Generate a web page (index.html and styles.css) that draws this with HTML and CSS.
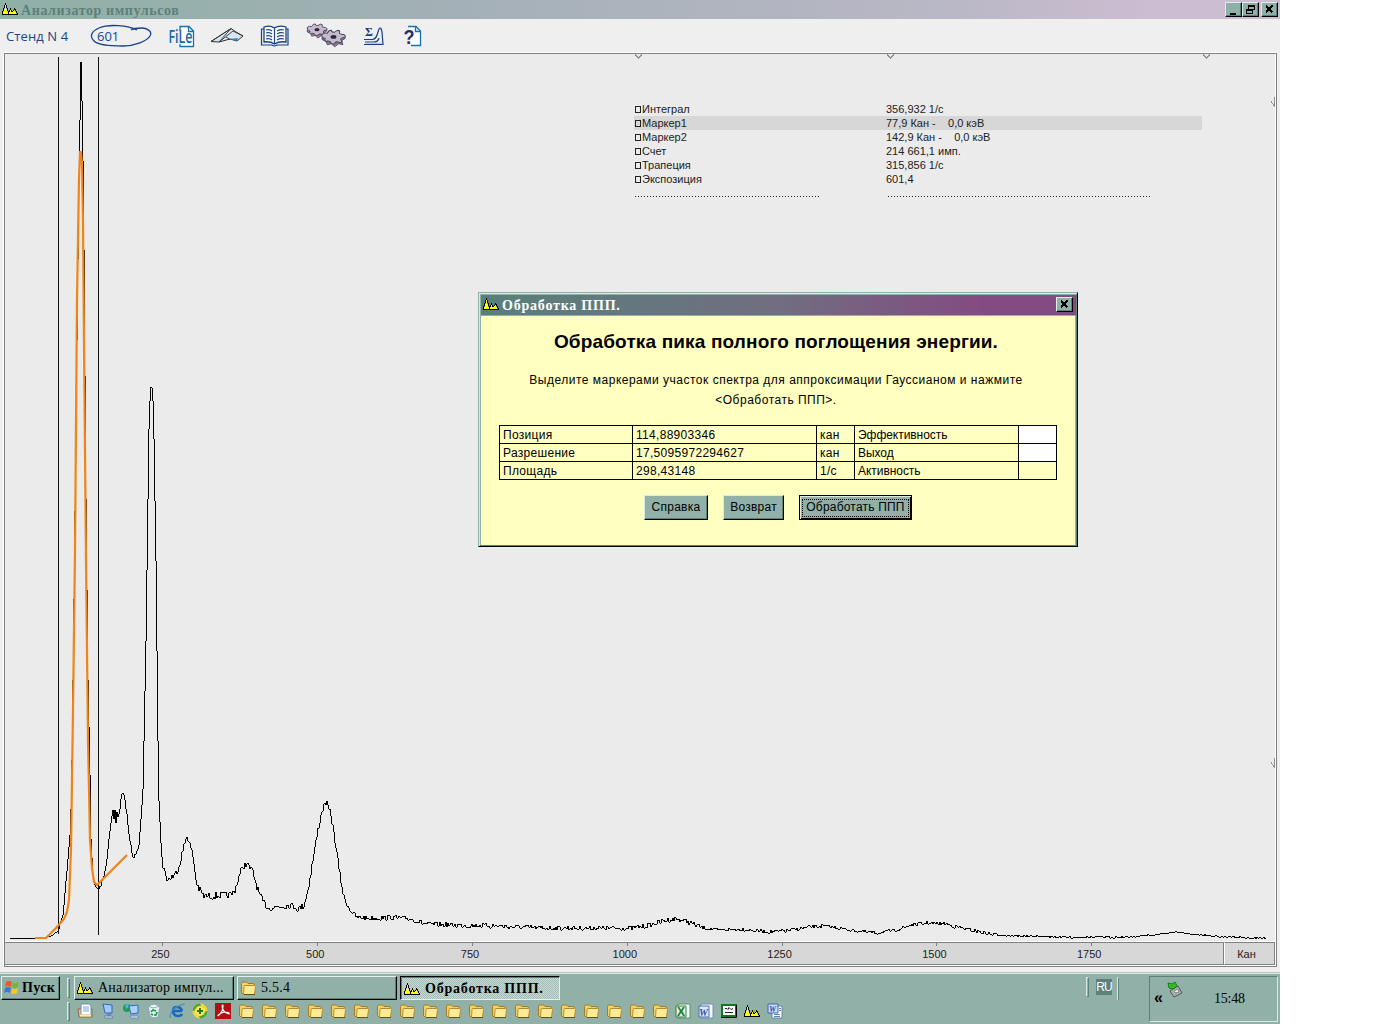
FILE: index.html
```html
<!DOCTYPE html>
<html lang="ru">
<head>
<meta charset="utf-8">
<title>Анализатор импульсов</title>
<link rel="stylesheet" href="styles.css">
</head>
<body>
<svg class="defs" width="0" height="0">
  <symbol id="peaks" viewBox="0 0 16 14"><g shape-rendering="crispEdges"><path d="M1 10H2V7H3V3H4V7H5V10H6V12H1ZM7 12V10H8V8H9V10H11V9H12V8H13V10H14V12Z" fill="#ffff00"/><path d="M0 12h16v1H0zM0 9h1v3H0zM1 6h1v3H1zM2 3h1v3H2zM3 1h1v2H3zM4 3h1v3H4zM5 6h1v3H5zM6 9h1v3H6zM7 8h1v2H7zM8 6h1v2H8zM9 8h1v2H9zM10 9h1v1H10zM11 8h1v1H11zM12 6h1v2H12zM13 7h1v2H13zM14 9h1v2H14zM15 11h1v1H15z"/></g></symbol>
  <symbol id="folder" viewBox="0 0 16 16"><path d="M1.500 13V3.500Q1.500 2 3 2h3.500L8 3.500h5Q14.500 3.500 14.500 5v8.500H2Z" fill="#f3d264" stroke="#a67c22"/><path d="M3.500 14.500 4 6.500Q4 5.500 5 5.500h9.500Q15.500 5.500 15.500 6.500L14.500 14.500Z" fill="#ffeb96" stroke="#b58d30"/><path d="M4 14.500h11" stroke="#6d5010"/></symbol>
  <symbol id="gear" viewBox="0 0 24 18"><path d="M1 8V10L5 12 6 15 10 14 13 17 17 14 21 15 20 11 23 9V7L19 8 16 13 9 13Z" fill="#8d8199" stroke="#4c4260" stroke-width=".8"/><path d="M1 5Q3 3 6 4 7 1 10 1 10 3 13 3 16 0 18 2 17 5 20 5 24 5 23 8 19 8 19 10 21 13 18 13 14 11 13 14 10 15 9 12 6 11 5 12 3 11 4 9 0 8 1 5Z" fill="#c5bccb" stroke="#4c4260" stroke-width="1"/><ellipse cx="12" cy="7.500" rx="2.800" ry="1.800" fill="#2e2440"/></symbol>
</svg>
<div class="desktop">
  <header class="titlebar">
    <svg class="app-icon" width="16" height="14"><use href="#peaks"/></svg>
    <h1 class="title">Анализатор импульсов</h1>
    <div class="controls">
      <span class="ctl"><svg width="15" height="13"><path d="M4 10h6v2H4z"/></svg></span>
      <span class="ctl"><svg width="15" height="13"><path d="M5.500 2.500h6v4h-6zM5 3h7M3.500 6.500h6v4h-6zM3 7h7" fill="none" stroke="#000"/><path d="M4 8h5v2H4z" fill="#8fb0a8"/></svg></span>
      <span class="ctl last"><svg width="15" height="13"><path d="M4 2.500 10.500 9.500M10.500 2.500 4 9.500" stroke="#000" stroke-width="2"/></svg></span>
    </div>
  </header>
  <nav class="toolbar">
    <span class="stand">Стенд N 4</span>
    <svg class="tool t-count" width="62" height="26" viewBox="90 22 62 26"><path d="M137 29C128 24 108 23 99 27S90 36 94 40 111 45 123 45 147 40 150 35 146 27 142 27 134 27 131 29" fill="none" stroke="#1b418c" stroke-width="1.300"/><text x="97" y="39.500" class="hand count">601</text></svg>
    <svg class="tool t-file" width="28" height="24" viewBox="168 23 28 24"><path d="M180 30V25.500H189L193.500 30V45.500H180V43M188.500 25.500V30.500H193.500" fill="#fff" stroke="#1672a8" stroke-width="1.300"/><text x="168.500" y="42" class="hand file" textLength="24" lengthAdjust="spacingAndGlyphs">FiLe</text></svg>
    <svg class="tool t-plane" width="34" height="18" viewBox="210 26 34 18"><path d="M211 40.500 231 27.500 236 31 243 35 237 40 230 38 219 41Z" fill="#d7e7f1" stroke="#333" stroke-width="1"/><path d="M211 40.500 231 27.500 219 41M219 41 233 30 243 35M226 36 230 38.500" fill="none" stroke="#333" stroke-width=".9"/><path d="M230 38 238 37 237 40Z" fill="#1c93b5"/></svg>
    <svg class="tool t-book" width="30" height="24" viewBox="260 23 30 24"><path d="M264 26Q270 24 274.500 27 279 24 286 26V41Q279 40 274.500 43 270 40 264 41Z" fill="#fff" stroke="#174184" stroke-width="1.300"/><path d="M264 28H261.500V44H272Q274.500 46 277 44H288V28H286M274.500 27V43M266 29q4-1 6 1M266 32q4-1 6 1M266 35q4-1 6 1M266 38q4-1 6 1M277 30q3-2 7-1M277 33q3-2 7-1M277 36q3-2 7-1M277 39q3-2 7-1" fill="none" stroke="#174184" stroke-width="1.200"/></svg>
    <svg class="tool t-gears" width="40" height="26" viewBox="306 22 40 26"><use href="#gear" x="306" y="22" width="22" height="16"/><use href="#gear" x="321" y="28" width="25" height="19"/></svg>
    <svg class="tool t-sigma" width="23" height="22" viewBox="363 25 23 22"><path d="M364 39.500H372Q376 39 377 35L379 29Q381 26 382 32L383 44.500H364M365 42H374Q378 42 379 38" fill="none" stroke="#1b3d85" stroke-width="1.200"/><path d="M365 43.300h17" stroke="#a4c5df"/><text x="365" y="36" class="sigma">Σ</text></svg>
    <svg class="tool t-help" width="20" height="24" viewBox="403 23 20 24"><path d="M408 25.500H416L420.500 30V44.500H411M415.500 26V30.500H420" fill="#fff" stroke="#1672a8" stroke-width="1.300"/><text x="403.500" y="43" class="help" textLength="11" lengthAdjust="spacingAndGlyphs">?</text></svg>
  </nav>
  <main class="frame">
    <section class="plot">
      <svg class="chart" width="1270" height="887" viewBox="5 54 1270 887">
        <g class="handles">
          <path d="M635 54.500 638.500 58 642 54.500M887 54.500 890.500 58 894 54.500M1203 54.500 1206.500 58 1210 54.500M1274.500 97V106L1271 101.500M1274.500 758V767L1271 762.500"/>
        </g>
        <path id="spectrum" class="spectrum"/>
        <path class="marker" d="M58.500 57V934M98.500 57V935"/>
        <path class="fit" d="M35 938H46L56 928 64 919 67 912 69 900 71 850 72 780 73 710 75 550 77 300 79 179 80 152H81L82 165 83 222 84 340 86 560 88 740 90 840 92 868 94 882 97 885 127 855"/>
      </svg>
      <div class="readout">
        <div class="row"><span class="name">Интеграл</span><span class="val">356,932 1/с</span></div>
        <div class="row active"><span class="name">Маркер1</span><span class="val">77,9 Кан -    0,0 кэВ</span></div>
        <div class="row"><span class="name">Маркер2</span><span class="val">142,9 Кан -    0,0 кэВ</span></div>
        <div class="row"><span class="name">Счет</span><span class="val">214 661,1 имп.</span></div>
        <div class="row"><span class="name">Трапеция</span><span class="val">315,856 1/с</span></div>
        <div class="row"><span class="name">Экспозиция</span><span class="val">601,4</span></div>
        <div class="rules"><i class="dots"></i><i class="dots long"></i></div>
      </div>
    </section>
    <footer class="scale">
      <div class="ticks"><span>250</span><span>500</span><span>750</span><span>1000</span><span>1250</span><span>1500</span><span>1750</span></div>
      <div class="unit">Кан</div>
    </footer>
  </main>
  <footer class="taskbar">
    <div class="tasks">
      <div class="task-row">
        <button class="start"><svg width="17" height="16" viewBox="0 0 17 16"><path d="M2 3Q5 1 8 3L7 8Q4 6 1 8Z" fill="#ee5a25"/><path d="M9 3.500Q12 5 15 3L14 8Q11 10 8 8Z" fill="#73b82d"/><path d="M1 9Q4 7 7 9L6 14Q3 12 0 14Z" fill="#3b78d8"/><path d="M8 9.500Q11 11 14 9L13 14Q10 16 7 14Z" fill="#f7c52d"/></svg><span>Пуск</span></button>
        <i class="grip"></i>
        <button class="task"><svg width="16" height="14"><use href="#peaks"/></svg><span>Анализатор импул...</span></button>
        <button class="task dir"><svg width="16" height="16"><use href="#folder"/></svg><span>5.5.4</span></button>
        <button class="task pressed"><svg width="16" height="14"><use href="#peaks"/></svg><span>Обработка ППП.</span></button>
      </div>
      <div class="quick-row">
        <i class="grip"></i>
        <div class="quick">
          <svg viewBox="0 0 16 16"><path d="M1 6h14v8H2Z" fill="#e5c678" stroke="#8b6b35"/><path d="M4 1h8l2 2v9H4Z" fill="#fff" stroke="#6d91bb"/><path d="M6 4h6M6 6h6M6 8h6" stroke="#7aa4d4"/><path d="M3 12.500h11" stroke="#f9eab5" stroke-width="2"/></svg>
          <svg viewBox="0 0 16 16"><path d="M3 1 12 2 12 10 5 10Z" fill="#9cccfa" stroke="#3565b4"/><path d="M7 10h4v3H7z" fill="#6685b4"/><path d="M4 13h8l1 2H5Z" fill="#dae5f5" stroke="#6982ad"/></svg>
          <svg viewBox="0 0 16 16"><circle cx="4" cy="5" r="4" fill="#269a4d"/><path d="M2 2 5 1 6 4 3 6Z" fill="#49b5e8"/><path d="M6 3 15 2 15 10 8 11Z" fill="#a8d2fa" stroke="#3668b7"/><path d="M7 13h8l1 2H8Z" fill="#eef4ff" stroke="#6d8bb6"/></svg>
          <svg viewBox="0 0 16 16"><path d="M2 3 8 1 14 3 12 14 7 15 4 13Z" fill="#e4f1f4" stroke="#88a9b6"/><path d="M2 3 7 5 14 3" fill="#fff" stroke="#88a9b6"/><path d="M5 9 7 7 10 8M11 9 10 12 8 12M7 12 5 11" fill="none" stroke="#1a9a3b" stroke-width="1.700"/></svg>
          <svg viewBox="0 0 16 16"><path d="M13 8H4Q4 4 8 4T13 8M4 9Q5 13 9 13 12 13 13 11" fill="none" stroke="#1768c4" stroke-width="2.600"/><path d="M1 15Q-1 10 8 4T15 2Q12 1 7 4T1 15" fill="#e9bc4a" stroke="#4487c8" stroke-width=".7"/></svg>
          <svg viewBox="0 0 16 16"><circle cx="8" cy="8" r="7.500" fill="#f4d43b"/><path d="M8 .5A7.500 7.500 0 0 0 .5 8L4 7 9 3ZM8 15.500A7.500 7.500 0 0 0 15.500 8L12 9 7 13Z" fill="#4ba635"/><circle cx="8" cy="8" r="5" fill="#ffe257"/><path d="M8 5v6M5 8h6" stroke="#257b2d" stroke-width="2"/></svg>
          <svg viewBox="0 0 16 16"><path d="M0 0h16v16H0z" fill="#b40d12"/><path d="M3 13Q8 9 8 3 8 1 7 3 8 10 14 11 15 9 9 9 3 11 3 13" fill="none" stroke="#fff" stroke-width="1.200"/></svg>
          <svg><use href="#folder"/></svg><svg><use href="#folder"/></svg><svg><use href="#folder"/></svg><svg><use href="#folder"/></svg><svg><use href="#folder"/></svg><svg><use href="#folder"/></svg><svg><use href="#folder"/></svg><svg><use href="#folder"/></svg><svg><use href="#folder"/></svg><svg><use href="#folder"/></svg><svg><use href="#folder"/></svg><svg><use href="#folder"/></svg><svg><use href="#folder"/></svg><svg><use href="#folder"/></svg><svg><use href="#folder"/></svg><svg><use href="#folder"/></svg><svg><use href="#folder"/></svg><svg><use href="#folder"/></svg><svg><use href="#folder"/></svg>
          <svg viewBox="0 0 16 16"><path d="M3 1h12v14H3Z" fill="#f8fff8" stroke="#559360"/><path d="M1 3h10v11H1Z" fill="#dcefd9" stroke="#338444"/><text x="2" y="12.500" class="doc-letter green">X</text></svg>
          <svg viewBox="0 0 16 16"><path d="M3 1h12v14H3Z" fill="#f8faff" stroke="#718ebe"/><path d="M1 3h10v11H1Z" fill="#dce7fb" stroke="#4d70ae"/><text x="1" y="12.500" class="doc-letter">W</text></svg>
          <svg viewBox="0 0 16 16"><path d="M1 2h14v11H1Z" fill="#fff" stroke="#087a20" stroke-width="2"/><path d="M4 5.500h2l1 1 1-2 2 2 2-1M4 9.500h8" fill="none" stroke="#222"/><path d="M0 14.500h15.500V2" fill="none" stroke="#000"/></svg>
          <svg viewBox="0 0 16 14"><use href="#peaks"/></svg>
          <svg viewBox="0 0 16 16"><path d="M5 3h10v12H5Z" fill="#fff" stroke="#6c83aa"/><path d="M7 11.500h6M7 13.500h6M12 5.500h2M12 7.500h2" stroke="#5582c0"/><path d="M1 1h10v9H1Z" fill="#c9dcf8" stroke="#3e68ae"/><text x="2" y="8.500" class="doc-letter small">W</text></svg>
        </div>
      </div>
    </div>
    <div class="lang"><i class="grip"></i><span>RU</span><i class="grip flat"></i></div>
    <div class="tray"><span class="more">«</span><svg width="16" height="17" viewBox="0 0 16 17"><path d="M3 10 11 5 15 12 7 16Z" fill="#aab2b8" stroke="#555"/><path d="M7 10 11 8 12 11 8 12Z" fill="#eee" stroke="#555" stroke-width=".6"/><path d="M1 2 5 3 8 1 10 5 6 8 2 7Z" fill="#35bc25" stroke="#15801b"/></svg><time>15:48</time></div>
  </footer>

  <section class="dialog">
    <header class="dialog-title"><svg width="16" height="14"><use href="#peaks"/></svg><h2>Обработка ППП.</h2><span class="ctl"><svg width="15" height="13"><path d="M4 2.500 10.500 9.500M10.500 2.500 4 9.500" stroke="#000" stroke-width="2"/></svg></span></header>
    <div class="dialog-body">
      <h3>Обработка пика полного поглощения энергии.</h3>
      <p>Выделите маркерами участок спектра для аппроксимации Гауссианом и нажмите<br>&lt;Обработать ППП&gt;.</p>
      <table>
        <colgroup><col class="c1"><col class="c2"><col class="c3"><col class="c4"><col class="c5"></colgroup>
        <tr><td>Позиция</td><td>114,88903346</td><td>кан</td><td class="label">Эффективность</td><td class="input"></td></tr>
        <tr><td>Разрешение</td><td>17,5095972294627</td><td>кан</td><td class="label">Выход</td><td class="input"></td></tr>
        <tr><td>Площадь</td><td>298,43148</td><td>1/с</td><td class="label">Активность</td><td></td></tr>
      </table>
      <div class="actions"><button class="btn b1">Справка</button><button class="btn b2">Возврат</button><button class="btn b3"><span>Обработать ППП</span></button></div>
    </div>
  </section>
</div>
<script src="chart.js"></script>
</body>
</html>
```
FILE: styles.css
```css
*, *::before { box-sizing: border-box; }
body { margin: 0; background: #fff; width: 1395px; height: 1024px; overflow: hidden; font-family: "Liberation Sans", sans-serif; color: #000; }
h1, h2, h3, p { margin: 0; }
button { margin: 0; padding: 0; font: inherit; color: inherit; }
svg { display: block; flex: none; }
.defs { position: absolute; }
.desktop { position: relative; width: 1280px; height: 1024px; display: flex; flex-direction: column; background: #efefef; }

.titlebar { height: 19px; flex: none; display: flex; align-items: center; padding: 0 2px; background: linear-gradient(90deg, #8fb0a6 0, #a3b0b6 440px, #bab8c6 960px, #cdbdd2 1160px); }
.title { flex: 1; margin-left: 3px; padding-top: 2px; font: bold 14px/17px "Liberation Serif", serif; letter-spacing: .6px; color: #5b817a; }
.app-icon { margin-top: -1px; }
.controls { display: flex; }
.ctl { width: 17px; height: 15px; background: #8fb0a8; border: 1px solid; border-color: #dfeeea #000 #000 #dfeeea; box-shadow: inset -1px -1px #5b817a; }
.ctl svg { shape-rendering: crispEdges; }
.ctl.last { margin-left: 2px; }

.toolbar { height: 33px; flex: none; display: flex; align-items: center; padding-left: 6px; }
.tool { overflow: visible; }
.stand { width: 84px; font: 13px "Open Sans", sans-serif; letter-spacing: .1px; color: #17458f; }
.hand { font-family: "Open Sans", sans-serif; fill: #17458f; }
.count { font-size: 13px; }
.file { font-size: 18px; font-weight: 600; fill: #1567a2; }
.sigma { font: bold 12px "Liberation Serif", serif; fill: #1b3d85; }
.help { font: bold 20px "Liberation Sans", sans-serif; fill: #1b2f72; }
.t-file { margin-left: 16px; }
.t-plane { margin-left: 14px; }
.t-book { margin-left: 16px; }
.t-gears { margin-left: 16px; }
.t-sigma { margin-left: 17px; }
.t-help { margin-left: 17px; }

.frame { width: 1274px; height: 915px; flex: none; margin-left: 3px; border: 1px solid #fff; border-bottom: 0; border-right: 0; display: flex; flex-direction: column; box-shadow: inset 1px 1px #808080, inset -1px -1px #808080, inset -2px -2px #fff; padding: 1px 2px 2px 1px; background: #ebebeb; }
.plot { position: relative; height: 887px; flex: none; }
.handles { fill: none; stroke: #909090; shape-rendering: crispEdges; }
.spectrum { fill: none; stroke: #000; stroke-width: 1; shape-rendering: crispEdges; }
.marker { fill: none; stroke: #111; shape-rendering: crispEdges; }
.fit { fill: none; stroke: #f08418; stroke-width: 2.2; }
.readout { position: absolute; left: 629px; top: 48px; width: 568px; font-size: 11px; line-height: 14px; color: #222; }
.row { display: grid; grid-template-columns: 252px 1fr; height: 14px; white-space: pre; }
.row.active { background: #d7d7d7; }
.name::before { content: ""; display: inline-block; width: 6px; height: 7px; margin: 0 1px 0 1px; border: 1px solid #222; }
.rules { display: flex; gap: 69px; padding: 10px 0 0 1px; }
.dots { width: 184px; height: 1px; background: repeating-linear-gradient(90deg, #222 0 1px, transparent 1px 3px); }
.dots.long { width: 263px; }

.scale { height: 24px; flex: none; display: flex; border-top: 1px solid #fff; background: #d7d7d7; font-size: 11px; color: #222; }
.ticks { width: 1219px; display: flex; padding-left: 78px; border-top: 1px solid #808080; border-right: 1px solid #808080; border-bottom: 1px solid #808080; }
.ticks span { position: relative; width: 154.800px; text-align: center; line-height: 22px; }
.ticks span::before { content: ""; position: absolute; left: calc(50% + 2px); top: 0; width: 1px; height: 3px; background: #808080; }
.unit { flex: 1; text-align: center; line-height: 22px; padding-right: 6px; border: 1px solid #808080; border-left: 1px solid #fff; }

.taskbar { margin-top: 5px; height: 52px; flex: none; display: flex; background: #91b0a8; border-top: 1px solid #b4cbc5; box-shadow: inset 0 1px #dbe9e5; font-family: "Liberation Serif", serif; }
.tasks { width: 1086px; padding: 3px 0 0 1px; }
.task-row { display: flex; height: 24px; }
.start, .task { height: 24px; display: flex; align-items: center; background: #91b0a8; border: 1px solid; border-color: #e4f0ed #000 #000 #e4f0ed; box-shadow: inset -1px -1px #5b817a; }
.start { width: 59px; padding-left: 2px; font-weight: bold; font-size: 14px; gap: 1px; letter-spacing: .4px; }
.start svg { margin-top: -2px; }
.grip { width: 3px; height: 20px; margin: 2px 0 0 7px; border: 1px solid; border-color: #dbe9e5 #5b817a #5b817a #dbe9e5; }
.task-row .grip { margin-right: 4px; }
.task { width: 160px; padding: 0 3px 1px 2px; gap: 5px; margin-right: 3px; font-size: 14px; letter-spacing: .25px; white-space: nowrap; }
.task.pressed { border-color: #000 #e4f0ed #e4f0ed #000; box-shadow: inset 1px 1px #5b817a; background: repeating-conic-gradient(#c7d8d4 0 25%, #a3beb7 0 50%) 0 0 / 2px 2px; font-weight: bold; padding: 2px 3px 0; letter-spacing: .78px; }
.quick-row { display: flex; padding: 0 0 0 59px; }
.quick-row .grip { height: 19px; }
.quick { display: grid; grid-template-columns: repeat(31, 23px); margin-left: 3px; padding-top: 3px; justify-items: center; }
.quick svg { width: 16px; height: 16px; }
.doc-letter { font: italic bold 10px "Liberation Serif", serif; fill: #2856a7; }
.doc-letter.green { font: bold 12px "Liberation Sans", sans-serif; fill: #1d7533; }
.doc-letter.small { font-size: 8px; }
.lang { width: 63px; display: flex; padding-top: 3px; }
.lang .grip { margin: 1px 0 0; }
.lang .flat { height: 23px; width: 2px; border-bottom: 0; }
.lang span { width: 16px; height: 16px; margin: 3px 5px 0 7px; background: #5b817a; color: #fff; font: 12px/17px "Liberation Sans", sans-serif; letter-spacing: -.8px; text-align: center; }
.tray { width: 129px; height: 46px; margin-top: 3px; padding-left: 4px; display: flex; border: 1px solid; border-color: #5b817a #dbe9e5 #dbe9e5 #5b817a; }
.more { width: 13px; font: bold 16px/42px "Liberation Sans", sans-serif; }
.tray svg { margin-top: 4px; }
.tray time { margin-left: 31px; font-size: 14px; line-height: 43px; letter-spacing: -.2px; }

.dialog { position: absolute; left: 478px; top: 292px; width: 600px; height: 255px; padding: 1px; border: 1px solid; border-color: #91b0a8 #000 #000 #91b0a8; box-shadow: inset 1px 1px #dbe9e5, inset -1px -1px #5b817a; background: #91b0a8; }
.dialog-title { height: 21px; margin: 1px 0 0 1px; display: flex; align-items: center; padding: 0 3px 2px 2px; background: linear-gradient(90deg, #58807a, #706e80 50%, #844a82 85%); border-bottom: 1px solid #91b0a8; }
.dialog-title h2 { flex: 1; margin-left: 3px; padding-top: 2px; font: bold 14px/17px "Liberation Serif", serif; letter-spacing: .78px; color: #fff; }
.dialog-body { height: 229px; margin: 0 1px 0 1px; padding-top: 14px; background: #ffffc0; display: flex; flex-direction: column; }
.dialog-body h3 { margin-right: 4px; text-align: center; font-size: 19px; line-height: 24px; letter-spacing: .15px; white-space: nowrap; }
.dialog-body p { margin: 16px 4px 0 0; text-align: center; font-size: 12px; line-height: 20px; letter-spacing: .5px; white-space: nowrap; }
.dialog-body table { margin: 15px 0 0 18px; width: 558px; border-collapse: collapse; table-layout: fixed; font-size: 12px; letter-spacing: .3px; }
.c1 { width: 133px; } .c2 { width: 184px; } .c3 { width: 38px; } .c4 { width: 164px; } .c5 { width: 38px; }
td { height: 18px; padding: 1px 3px 0; border: 1px solid #000; line-height: 16px; }
td.label { letter-spacing: -.05px; }
td.input { background: #fff; }
.actions { display: flex; padding: 15px 0 0 163px; }
.btn { height: 25px; padding-bottom: 2px; background: #91b0a8; border: 1px solid; border-color: #dbe9e5 #000 #000 #dbe9e5; box-shadow: inset -1px -1px #5b817a; font-size: 12px; letter-spacing: .25px; white-space: nowrap; }
.b1 { width: 64px; margin-right: 15px; }
.b2 { width: 61px; margin-right: 15px; }
.b3 { width: 113px; padding: 2px; border-color: #000; box-shadow: inset 1px 1px #dbe9e5, inset -1px -1px #000; }
.b3 span { display: block; height: 18px; line-height: 15px; letter-spacing: .2px; border: 1px dotted #000; }
```
FILE: chart.js
```js
// Spectrum outline: [x, y] nodes; counting noise is added between them.
const nodes = [[9,938],[35,938],[50,936],[57,931],[59,925],[62,915],[64,893],[67,860],[69,835],[70,810],[71,760],[73,600],[75,420],[78,178],[79,120],[80,62],[80,58],[81,100],[82,160],[83,250],[85,500],[87,680],[89,775],[90,838],[92,875],[94,886],[97,890],[98,888],[100,886],[104,872],[106,858],[108,838],[110,822],[112,811],[113,820],[114,811],[115,824],[116,812],[117,818],[119,809],[120,798],[122,792],[124,800],[126,815],[128,835],[130,845],[132,858],[134,855],[136,851],[138,846],[140,820],[142,790],[143,740],[145,640],[147,500],[148,430],[149,400],[150,388],[151,387],[152,400],[153,440],[155,560],[157,740],[158,800],[160,845],[162,865],[165,877],[167,880],[170,877],[174,875],[178,866],[182,850],[185,839],[186,835],[189,845],[192,856],[195,880],[198,889],[203,896],[210,896],[230,895],[234,890],[238,877],[242,866],[246,864],[252,872],[257,890],[262,902],[268,908],[280,906],[290,905],[298,909],[303,905],[307,890],[312,860],[317,830],[321,811],[325,802],[330,815],[334,840],[339,875],[343,898],[349,910],[356,917],[365,918],[380,918],[388,917],[410,919],[425,924],[450,925],[500,926],[540,928],[600,928],[630,928],[650,925],[665,920],[675,919],[685,921],[700,927],[715,930],[740,929],[770,932],[790,930],[815,926],[825,926],[850,930],[875,933],[895,930],[910,925],[927,923],[945,924],[965,929],[990,934],[1020,936],[1070,937],[1125,937],[1150,935],[1175,932],[1195,934],[1225,937],[1265,938]];
let seed = 7;
const rand = () => (seed = (seed * 16807) % 2147483647) / 2147483647 - 0.5;
let d = "";
let prev = 938;
for (let i = 1; i < nodes.length; i++) {
  const [x0, y0] = nodes[i - 1], [x1, y1] = nodes[i];
  for (let x = x0 + 1; x <= x1; x++) {
    const amp = x < 58 ? 0 : x < 160 ? 3 : x < 345 ? 7 : x < 700 ? 5 : x < 1000 ? 3.5 : 2;
    const y = Math.round(y0 + (y1 - y0) * (x - x0) / (x1 - x0) + rand() * amp);
    // one pixel column per channel, joined to the previous level
    d += "M" + (x + 0.5) + " " + Math.min(prev, y) + "V" + (Math.max(prev, y) + (prev === y ? 1 : 0));
    prev = y;
  }
}
document.getElementById("spectrum").setAttribute("d", d);
```
